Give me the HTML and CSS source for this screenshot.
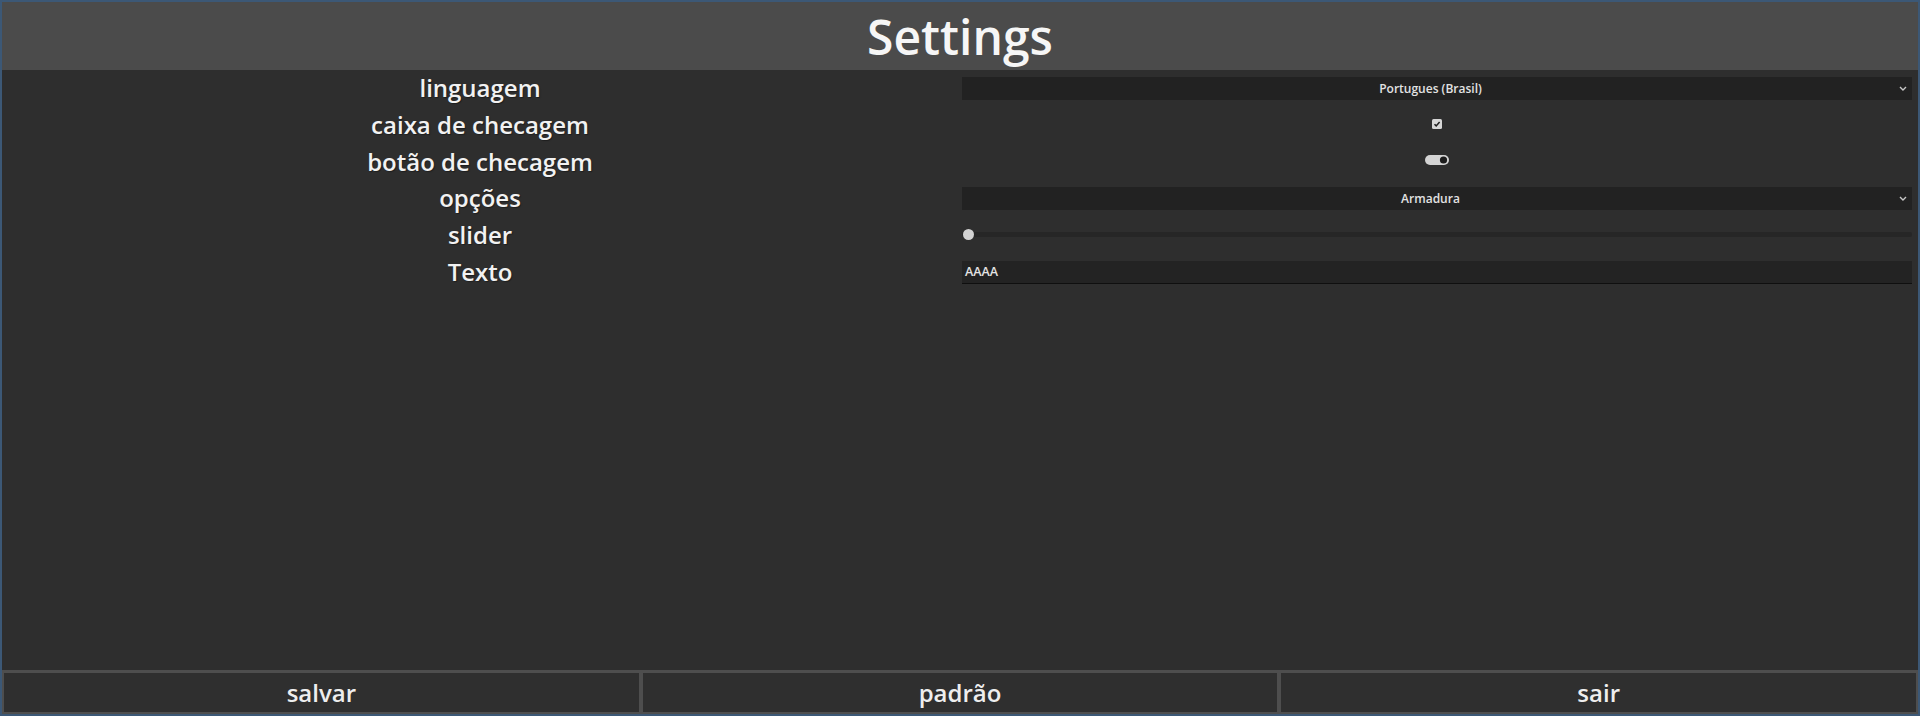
FILE: index.html
```html
<!DOCTYPE html>
<html lang="pt-BR">
<head>
<meta charset="utf-8">
<title>Settings</title>
<link rel="stylesheet" href="styles.css">
</head>
<body>
<div class="window">
  <header class="titlebar">Settings</header>
  <main class="content">
    <div class="label">linguagem</div>
    <div class="cell">
      <div class="select"><span class="select-text">Portugues (Brasil)</span>
        <svg class="chev" width="8" height="5" viewBox="0 0 8 5"><path d="M1 1 L4 4 L7 1" fill="none" stroke="#c8c8c8" stroke-width="1.4"/></svg>
      </div>
    </div>

    <div class="label">caixa de checagem</div>
    <div class="cell center">
      <svg class="checkbox" width="10" height="10" viewBox="0 0 10 10"><rect x="0" y="0" width="10" height="10" rx="1.5" fill="#d6d6d6"/><path d="M2.5 5.2 L4.2 6.9 L7.6 3" fill="none" stroke="#1e1e1e" stroke-width="1.5"/></svg>
    </div>

    <div class="label">botão de checagem</div>
    <div class="cell center">
      <svg class="toggle" width="24" height="10" viewBox="0 0 24 10"><rect x="0" y="0" width="24" height="10" rx="5" fill="#d4d4d4"/><circle cx="18.5" cy="5" r="3.6" fill="#1c1c1c"/></svg>
    </div>

    <div class="label">opções</div>
    <div class="cell">
      <div class="select"><span class="select-text">Armadura</span>
        <svg class="chev" width="8" height="5" viewBox="0 0 8 5"><path d="M1 1 L4 4 L7 1" fill="none" stroke="#c8c8c8" stroke-width="1.4"/></svg>
      </div>
    </div>

    <div class="label">slider</div>
    <div class="cell">
      <div class="slider"><div class="track"></div><div class="grabber"></div></div>
    </div>

    <div class="label">Texto</div>
    <div class="cell">
      <div class="input">AAAA</div>
    </div>
  </main>
  <footer class="footer">
    <div class="btn">salvar</div>
    <div class="btn">padrão</div>
    <div class="btn">sair</div>
  </footer>
</div>
</body>
</html>
```
FILE: styles.css
```css
html, body {
  margin: 0;
  padding: 0;
  background: #2e2e2e;
}
body {
  width: 1920px;
  height: 716px;
  overflow: hidden;
  font-family: "Open Sans", "Noto Sans", sans-serif;
}
.window {
  box-sizing: border-box;
  width: 1920px;
  height: 716px;
  border: 2px solid #3c5876;
  display: flex;
  flex-direction: column;
  background: #2e2e2e;
}
.titlebar {
  height: 68px;
  line-height: 70px;
  background: #4b4b4b;
  color: #f6f6f6;
  text-align: center;
  font-size: 48px;
  font-weight: 600;
  flex: none;
}
.content {
  flex: 1;
  display: grid;
  grid-template-columns: 956px 1fr;
  column-gap: 4px;
  padding-right: 6px;
  grid-auto-rows: 36.8px;
  align-content: start;
  background: #2e2e2e;
}
.label {
  text-align: center;
  font-size: 24px;
  font-weight: 600;
  line-height: 36.8px;
  color: #f2f2f2;
  text-shadow: 1px 1px 1px rgba(0,0,0,0.35);
}
.cell {
  display: flex;
  align-items: center;
}
.cell.center {
  justify-content: center;
}
.select {
  flex: 1;
  height: 23px;
  background: #222222;
  display: flex;
  align-items: center;
  color: #e2e2e2;
  font-size: 12px;
  font-weight: 600;
}
.select-text {
  flex: 1;
  text-align: center;
}
.chev {
  margin-right: 5px;
  display: block;
}
.checkbox { display: block; margin-top: -3px; }
.toggle { display: block; margin-top: -3px; }
.slider {
  flex: 1;
  position: relative;
  height: 11px;
  display: flex;
  align-items: center;
  margin-top: -3px;
}
.track {
  flex: 1;
  height: 5px;
  background: #262626;
  border-radius: 2px;
}
.grabber {
  position: absolute;
  left: 1px;
  top: 0;
  width: 11px;
  height: 11px;
  border-radius: 50%;
  background: #d2d2d2;
}
.input {
  flex: 1;
  box-sizing: border-box;
  height: 23px;
  line-height: 22px;
  background: #232323;
  border-bottom: 1px solid #0f0f0f;
  padding-left: 3px;
  color: #e4e4e4;
  font-size: 12.5px;
  font-weight: 600;
}
.footer {
  flex: none;
  height: 44px;
  display: flex;
}
.btn {
  flex: 1;
  box-sizing: border-box;
  height: 44px;
  border: 2px solid #4e4e4e;
  border-top-width: 3px;
  background: #2f2f2f;
  color: #eeeeee;
  font-size: 24px;
  font-weight: 600;
  text-align: center;
  line-height: 39px;
}
```
